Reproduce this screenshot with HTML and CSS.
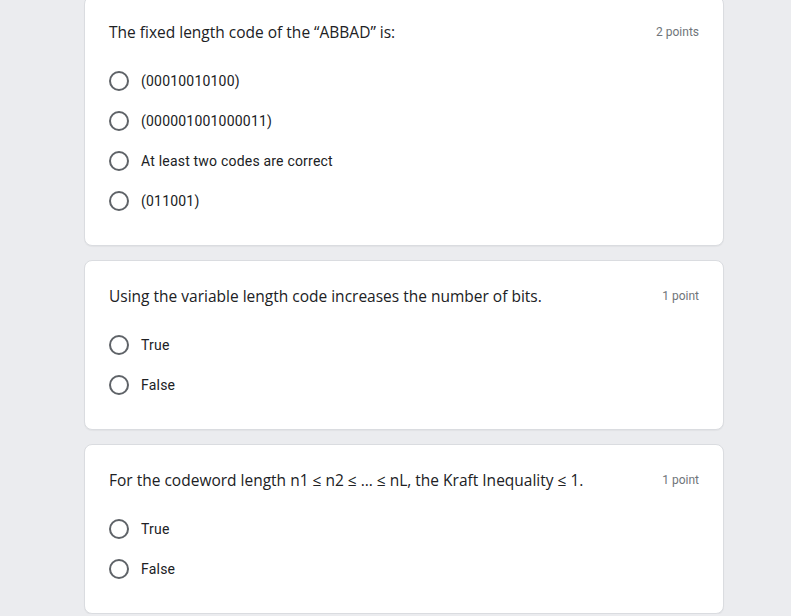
FILE: index.html
```html
<!DOCTYPE html>
<html>
<head>
<meta charset="utf-8">
<link rel="stylesheet" href="styles.css">
</head>
<body>
<main class="form">
  <section class="card first">
    <div class="head">
      <div class="title">The fixed length code of the “ABBAD” is:</div>
      <div class="points">2 points</div>
    </div>
    <div class="options">
      <label class="option"><span class="radio"></span><span class="label">(00010010100)</span></label>
      <label class="option"><span class="radio"></span><span class="label">(000001001000011)</span></label>
      <label class="option"><span class="radio"></span><span class="label">At least two codes are correct</span></label>
      <label class="option"><span class="radio"></span><span class="label">(011001)</span></label>
    </div>
  </section>
  <section class="card">
    <div class="head">
      <div class="title">Using the variable length code increases the number of bits.</div>
      <div class="points">1 point</div>
    </div>
    <div class="options">
      <label class="option"><span class="radio"></span><span class="label">True</span></label>
      <label class="option"><span class="radio"></span><span class="label">False</span></label>
    </div>
  </section>
  <section class="card">
    <div class="head">
      <div class="title">For the codeword length n1 ≤ n2 ≤ … ≤ nL, the Kraft Inequality ≤ 1.</div>
      <div class="points">1 point</div>
    </div>
    <div class="options">
      <label class="option"><span class="radio"></span><span class="label">True</span></label>
      <label class="option"><span class="radio"></span><span class="label">False</span></label>
    </div>
  </section>
</main>
</body>
</html>
```
FILE: styles.css
```css
html, body {
  margin: 0;
  padding: 0;
  background: #ebecef;
  overflow: hidden;
}
.form {
  width: 640px;
  margin-left: 84px;
  margin-top: -4px;
  display: flex;
  flex-direction: column;
  gap: 14px;
}
.card {
  background: #fff;
  border: 1px solid #dadce0;
  border-radius: 8px;
  padding: 23px 24px 24px 24px;
  box-shadow: 0 1px 1px rgba(0,0,0,0.04);
}
.head {
  display: flex;
  justify-content: space-between;
  align-items: center;
  height: 24px;
}
.title {
  font-family: "Open Sans", Roboto, sans-serif;
  font-size: 15.5px;
  color: #202124;
  line-height: 24px;
}
.points {
  font-family: Roboto, "Liberation Sans", sans-serif;
  font-size: 12px;
  color: #70757a;
  line-height: 24px;
}
.options {
  margin-top: 17px;
  display: flex;
  flex-direction: column;
}
.option {
  display: flex;
  align-items: center;
  height: 40px;
}
.radio {
  width: 16px;
  height: 16px;
  border: 2px solid #5f6368;
  border-radius: 50%;
  margin-right: 12px;
  box-sizing: content-box;
  flex: none;
}
.label {
  font-family: Roboto, "Liberation Sans", sans-serif;
  font-size: 14px;
  color: #202124;
  letter-spacing: 0.2px;
}
```
